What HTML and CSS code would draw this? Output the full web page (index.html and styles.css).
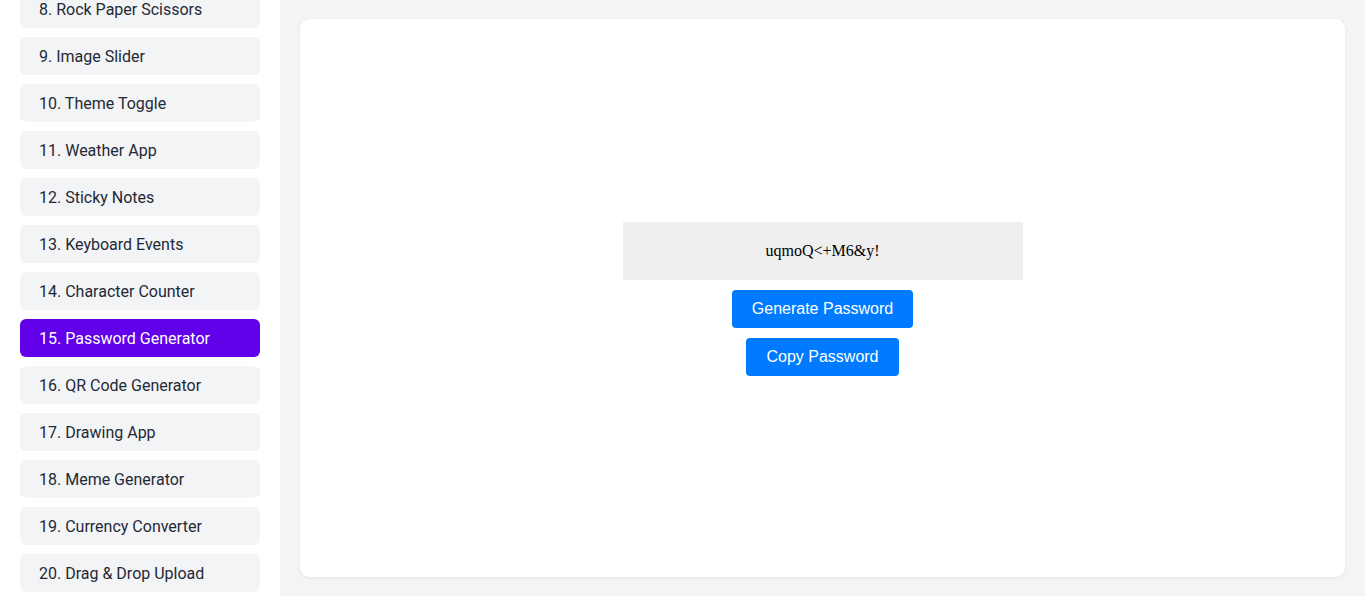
FILE: index.html
```html
<!DOCTYPE html>
<html lang="en">
<head>
<meta charset="UTF-8">
<title>Password Generator</title>
<link rel="stylesheet" href="styles.css">
</head>
<body>
<div class="layout">
  <nav class="sidebar" id="sidebar">
    <ul class="nav-list">
      <li class="nav-item">1. Counter App</li>
      <li class="nav-item">2. Todo List</li>
      <li class="nav-item">3. Digital Clock</li>
      <li class="nav-item">4. Stopwatch</li>
      <li class="nav-item">5. Calculator</li>
      <li class="nav-item">6. Quiz App</li>
      <li class="nav-item">7. Form Validation</li>
      <li class="nav-item">8. Rock Paper Scissors</li>
      <li class="nav-item">9. Image Slider</li>
      <li class="nav-item">10. Theme Toggle</li>
      <li class="nav-item">11. Weather App</li>
      <li class="nav-item">12. Sticky Notes</li>
      <li class="nav-item">13. Keyboard Events</li>
      <li class="nav-item">14. Character Counter</li>
      <li class="nav-item active">15. Password Generator</li>
      <li class="nav-item">16. QR Code Generator</li>
      <li class="nav-item">17. Drawing App</li>
      <li class="nav-item">18. Meme Generator</li>
      <li class="nav-item">19. Currency Converter</li>
      <li class="nav-item">20. Drag &amp; Drop Upload</li>
    </ul>
  </nav>
  <main class="main">
    <section class="card">
      <div class="generator">
        <div class="password-box">uqmoQ&lt;+M6&amp;y!</div>
        <button class="btn">Generate Password</button>
        <button class="btn">Copy Password</button>
      </div>
    </section>
  </main>
</div>
<script>
  document.getElementById('sidebar').scrollTop = 359;
</script>
</body>
</html>
```
FILE: styles.css
```css
* { box-sizing: border-box; }

html, body {
  margin: 0;
  padding: 0;
  height: 100%;
  overflow: hidden;
}

body {
  font-family: Roboto, "Liberation Sans", Arial, sans-serif;
  background: #f3f4f6;
  color: #1f2937;
}

.layout {
  display: flex;
  height: 100vh;
}

.sidebar {
  width: 280px;
  flex-shrink: 0;
  background: #ffffff;
  overflow-y: auto;
  scrollbar-width: none;
  padding: 20px;
}

.sidebar::-webkit-scrollbar { display: none; }

.nav-list {
  list-style: none;
  margin: 0;
  padding: 0;
  display: flex;
  flex-direction: column;
  gap: 9px;
}

.nav-item {
  height: 38px;
  display: flex;
  align-items: center;
  padding: 0 19px;
  background: #f3f4f6;
  border-radius: 6px;
  font-size: 16px;
  color: #1f2937;
  white-space: nowrap;
}

.nav-item.active {
  background: #6200ea;
  color: #ffffff;
}

.main {
  flex: 1;
  padding: 19px 20px;
  display: flex;
}

.card {
  flex: 1;
  background: #ffffff;
  border-radius: 10px;
  box-shadow: 0 1px 4px rgba(0, 0, 0, 0.06);
  display: flex;
  align-items: center;
  justify-content: center;
}

.generator {
  display: flex;
  flex-direction: column;
  align-items: center;
  gap: 10px;
  padding-top: 2px;
}

.password-box {
  width: 400px;
  height: 58px;
  background: #efefef;
  font-family: "Liberation Serif", "Times New Roman", serif;
  font-size: 16px;
  color: #000000;
  display: flex;
  align-items: center;
  justify-content: center;
}

.btn {
  height: 38px;
  padding: 0 20px;
  border: none;
  border-radius: 4px;
  background: #007bff;
  color: #ffffff;
  font-family: "Liberation Sans", Arial, sans-serif;
  font-size: 16px;
  cursor: pointer;
}
```
